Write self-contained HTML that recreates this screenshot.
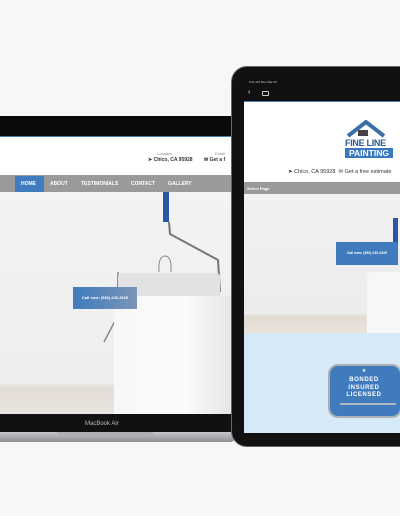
<!DOCTYPE html>
<html><head><style>
*{margin:0;padding:0;box-sizing:border-box}
body{width:400px;height:516px;background:#f7f7f7;position:relative;overflow:hidden;font-family:"Liberation Sans",sans-serif}
.a{position:absolute}
</style></head><body>
<!-- Laptop -->
<div class="a" style="left:0;top:116px;width:240px;height:300px;background:#0a0a0a"></div>
<div class="a" style="left:0;top:137px;width:232px;height:38px;background:#fff"></div>
<div class="a" style="left:0;top:136px;width:232px;height:1px;background:#4a7fb5"></div>
<div class="a" style="left:157px;top:151px;font-size:4px;color:#888">Location</div>
<div class="a" style="left:148px;top:157px;font-size:5px;font-weight:bold;color:#333">➤ Chico, CA 95928</div>
<div class="a" style="left:215px;top:151px;font-size:4px;color:#888">Email</div>
<div class="a" style="left:204px;top:157px;font-size:5px;font-weight:bold;color:#333">✉ Get a f</div>
<div class="a" style="left:0;top:175px;width:232px;height:17px;background:#9a9a9a"></div>
<div class="a" style="left:15px;top:176px;width:29px;height:16px;background:#3f7bbd"></div>
<div class="a" style="left:0;top:181px;width:232px;font-size:5px;font-weight:bold;color:#fff;white-space:nowrap">
<span class="a" style="left:21px">HOME</span><span class="a" style="left:50px">ABOUT</span><span class="a" style="left:81px">TESTIMONIALS</span><span class="a" style="left:131px">CONTACT</span><span class="a" style="left:168px">GALLERY</span></div>
<div class="a" style="left:0;top:192px;width:232px;height:222px;background:linear-gradient(#f3f3f3,#eeeeee 86%,#e3ddd5 88%,#e8e4de)"></div>
<div class="a" style="left:163px;top:192px;width:6px;height:30px;background:#2c55a8"></div>
<svg class="a" style="left:0;top:192px" width="232" height="222"><path d="M169 30 L170 42 L218 68 L220 100" stroke="#777" stroke-width="2" fill="none"/><path d="M118 80 L117 125 L104 150" stroke="#888" stroke-width="1.5" fill="none"/><path d="M159 80 Q158 64 165 64 Q172 64 171 80" stroke="#888" stroke-width="1" fill="none"/></svg>
<div class="a" style="left:118px;top:273px;width:102px;height:30px;background:#e2e2e2;border-radius:4px"></div>
<div class="a" style="left:114px;top:296px;width:118px;height:118px;background:linear-gradient(90deg,#f8f8f8,#fbfbfb 60%,#e6e6e6);border-radius:4px 4px 0 0"></div>
<div class="a" style="left:73px;top:287px;width:64px;height:22px;background:linear-gradient(90deg,#3f7bbd,#7a96b8);color:#fff;font-size:4px;font-weight:bold;text-align:center;line-height:22px">Call now: (530) 240-3100</div>
<div class="a" style="left:0;top:414px;width:240px;height:18px;background:#111"></div>
<div class="a" style="left:85px;top:421px;font-size:6px;color:#bbb">MacBook Air</div>
<div class="a" style="left:0;top:432px;width:236px;height:10px;background:linear-gradient(#c8c8cc,#8e8e92);border-radius:0 0 6px 0"></div>
<div class="a" style="left:57px;top:432px;width:96px;height:4px;background:#b0b0b4;border-radius:0 0 3px 3px"></div>
<!-- iPad -->
<div class="a" style="left:231px;top:66px;width:190px;height:381px;background:#111;border-radius:16px;border:1px solid #666"></div>
<div class="a" style="left:249px;top:80px;font-size:3px;color:#ccc">9:41 AM  Mon Mar 25</div>
<div class="a" style="left:248px;top:89px;font-size:7px;color:#fff">‹</div>
<div class="a" style="left:262px;top:91px;width:7px;height:5px;border:1px solid #ccc;border-radius:1px"></div>
<div class="a" style="left:244px;top:101px;width:156px;height:1px;background:#4a7fb5"></div>
<div class="a" style="left:244px;top:102px;width:156px;height:80px;background:#fff"></div>
<svg class="a" style="left:344px;top:120px" width="56" height="30"><path d="M4 16 L22 2 L40 16" stroke="#3a6fa8" stroke-width="4" fill="none"/><rect x="14" y="10" width="10" height="6" fill="#444"/></svg>
<div class="a" style="left:345px;top:138px;font-size:9px;font-weight:bold;color:#2d5a90;letter-spacing:-0.3px">FINE LINE</div>
<div class="a" style="left:345px;top:148px;width:48px;height:10px;background:#3a78c0;color:#fff;font-size:8.5px;font-weight:bold;text-align:center;line-height:10px">PAINTING</div>
<div class="a" style="left:288px;top:169px;font-size:5.5px;color:#333;white-space:nowrap">➤ Chico, CA 95928 &nbsp;✉ Get a free estimate</div>
<div class="a" style="left:244px;top:182px;width:156px;height:12px;background:#9a9a9a;color:#fff;font-size:4px;font-weight:bold;padding:4px 3px">Select Page</div>
<div class="a" style="left:244px;top:194px;width:156px;height:139px;background:linear-gradient(#f1f1f1,#ececec 86%,#e2dcd3 88%,#e8e3dc)"></div>
<div class="a" style="left:393px;top:218px;width:5px;height:30px;background:#2c55a8"></div>
<div class="a" style="left:367px;top:272px;width:33px;height:61px;background:#f7f7f7;border-radius:4px 0 0 0"></div>
<div class="a" style="left:336px;top:242px;width:62px;height:23px;background:#3f7bbd;color:#fff;font-size:3.5px;font-weight:bold;text-align:center;line-height:23px">Call now: (530) 240-3100</div>
<div class="a" style="left:244px;top:333px;width:156px;height:100px;background:#d6e9f7"></div>
<div class="a" style="left:328px;top:364px;width:74px;height:54px;background:#3f7bbd;border:2px solid #a9b0b8;border-radius:10px"></div>
<div class="a" style="left:328px;top:368px;width:72px;text-align:center;color:#fff;font-size:5px">★</div>
<div class="a" style="left:328px;top:377px;width:72px;text-align:center;color:#fff;font-size:6px;font-weight:bold;line-height:7.5px;letter-spacing:0.6px">BONDED<br>INSURED<br>LICENSED</div>
<div class="a" style="left:340px;top:403px;width:56px;height:2px;background:#b0b7bf"></div>
</body></html>
